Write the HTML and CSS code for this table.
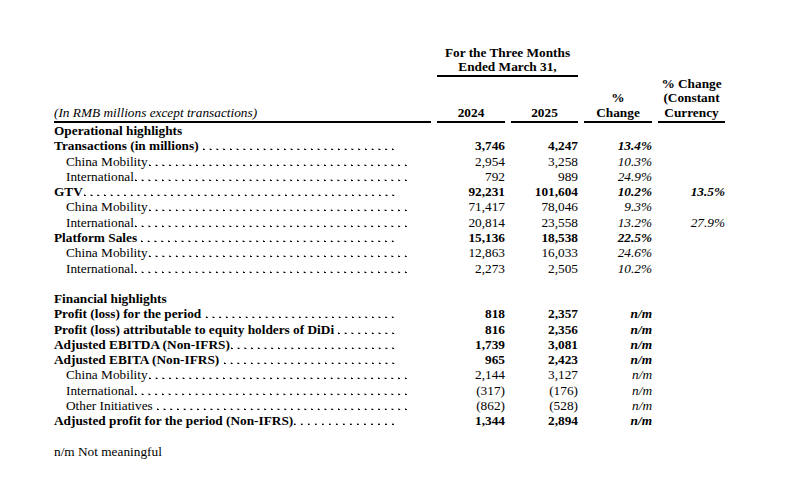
FILE: index.html
```html
<!DOCTYPE html>
<html>
<head>
<meta charset="utf-8">
<link rel="stylesheet" href="styles.css">
</head>
<body>
<div class="page">
  <div class="row head-a">
    <div class="period">For the Three Months<br>Ended March 31,</div>
  </div>
  <div class="row head-b">
    <div class="hcell units">(In RMB millions except transactions)</div>
    <div class="hcell">2024</div>
    <div class="hcell">2025</div>
    <div class="hcell">%<br>Change</div>
    <div class="hcell">% Change<br>(Constant<br>Currency</div>
  </div>

  <div class="row b"><div class="label"><span class="txt">Operational highlights</span></div></div>
  <div class="row b"><div class="label"><span class="txt">Transactions (in millions)</span><span class="lead sp"></span></div><div class="num">3,746</div><div class="num">4,247</div><div class="pct">13.4%</div><div class="pct"></div></div>
  <div class="row"><div class="label sub"><span class="txt">China Mobility</span><span class="lead"></span></div><div class="num">2,954</div><div class="num">3,258</div><div class="pct">10.3%</div><div class="pct"></div></div>
  <div class="row"><div class="label sub"><span class="txt">International</span><span class="lead"></span></div><div class="num">792</div><div class="num">989</div><div class="pct">24.9%</div><div class="pct"></div></div>
  <div class="row b"><div class="label"><span class="txt">GTV</span><span class="lead"></span></div><div class="num">92,231</div><div class="num">101,604</div><div class="pct">10.2%</div><div class="pct">13.5%</div></div>
  <div class="row"><div class="label sub"><span class="txt">China Mobility</span><span class="lead"></span></div><div class="num">71,417</div><div class="num">78,046</div><div class="pct">9.3%</div><div class="pct"></div></div>
  <div class="row"><div class="label sub"><span class="txt">International</span><span class="lead"></span></div><div class="num">20,814</div><div class="num">23,558</div><div class="pct">13.2%</div><div class="pct">27.9%</div></div>
  <div class="row b"><div class="label"><span class="txt">Platform Sales</span><span class="lead sp"></span></div><div class="num">15,136</div><div class="num">18,538</div><div class="pct">22.5%</div><div class="pct"></div></div>
  <div class="row"><div class="label sub"><span class="txt">China Mobility</span><span class="lead"></span></div><div class="num">12,863</div><div class="num">16,033</div><div class="pct">24.6%</div><div class="pct"></div></div>
  <div class="row"><div class="label sub"><span class="txt">International</span><span class="lead"></span></div><div class="num">2,273</div><div class="num">2,505</div><div class="pct">10.2%</div><div class="pct"></div></div>

  <div class="row blank"></div>

  <div class="row b"><div class="label"><span class="txt">Financial highlights</span></div></div>
  <div class="row b"><div class="label"><span class="txt">Profit (loss) for the period</span><span class="lead sp"></span></div><div class="num">818</div><div class="num">2,357</div><div class="pct">n/m</div><div class="pct"></div></div>
  <div class="row b"><div class="label"><span class="txt">Profit (loss) attributable to equity holders of DiDi</span><span class="lead sp"></span></div><div class="num">816</div><div class="num">2,356</div><div class="pct">n/m</div><div class="pct"></div></div>
  <div class="row b"><div class="label"><span class="txt">Adjusted EBITDA (Non-IFRS)</span><span class="lead"></span></div><div class="num">1,739</div><div class="num">3,081</div><div class="pct">n/m</div><div class="pct"></div></div>
  <div class="row b"><div class="label"><span class="txt">Adjusted EBITA (Non-IFRS)</span><span class="lead sp"></span></div><div class="num">965</div><div class="num">2,423</div><div class="pct">n/m</div><div class="pct"></div></div>
  <div class="row"><div class="label sub"><span class="txt">China Mobility</span><span class="lead"></span></div><div class="num">2,144</div><div class="num">3,127</div><div class="pct">n/m</div><div class="pct"></div></div>
  <div class="row"><div class="label sub"><span class="txt">International</span><span class="lead"></span></div><div class="num">(317)</div><div class="num">(176)</div><div class="pct">n/m</div><div class="pct"></div></div>
  <div class="row"><div class="label sub"><span class="txt">Other Initiatives</span><span class="lead sp"></span></div><div class="num">(862)</div><div class="num">(528)</div><div class="pct">n/m</div><div class="pct"></div></div>
  <div class="row b"><div class="label"><span class="txt">Adjusted profit for the period (Non-IFRS)</span><span class="lead"></span></div><div class="num">1,344</div><div class="num">2,894</div><div class="pct">n/m</div><div class="pct"></div></div>

  <div class="row blank"></div>

  <p class="note">n/m Not meaningful</p>
</div>
</body>
</html>
```

FILE: styles.css
```css
html, body {
  margin: 0;
  padding: 0;
  background: #ffffff;
}

body {
  font-family: "Liberation Serif", "Times New Roman", serif;
  font-size: 13.3px;
  line-height: 15.28px;
  color: #000000;
}

.page {
  padding: 46px 0 0 54px;
}

.row {
  display: grid;
  grid-template-columns: 377px 68px 67px 68px 67px;
  column-gap: 6px;
  min-height: 15.28px;
}

.head-a {
  line-height: 14.3px;
  font-weight: bold;
}

.period {
  grid-column: 2 / 4;
  text-align: center;
  border-bottom: 2px solid #000;
}

.head-b {
  line-height: 14.8px;
  font-weight: bold;
}

.hcell {
  text-align: center;
  border-bottom: 2px solid #000;
  display: flex;
  flex-direction: column;
  justify-content: flex-end;
}

.hcell.units {
  text-align: left;
  font-style: italic;
  font-weight: normal;
}

.b {
  font-weight: bold;
}

.label {
  display: flex;
  white-space: nowrap;
  padding-right: 20px;
  min-width: 0;
}

.b .label {
  padding-right: 33px;
}

.label.sub {
  padding-left: 12px;
}

.txt {
  flex: none;
}

.lead {
  flex: 1;
  min-width: 0;
  background-image: radial-gradient(circle at 1.7px 11.4px, #000 0.75px, rgba(0, 0, 0, 0) 1.15px);
  background-size: 6.65px 100%;
  background-repeat: space no-repeat;
  background-position: left top;
}

.lead.sp {
  margin-left: 3.3px;
}

.num {
  text-align: right;
}

.pct {
  text-align: right;
  font-style: italic;
}

.blank {
  height: 15.28px;
}

.note {
  margin: 0;
}
```
